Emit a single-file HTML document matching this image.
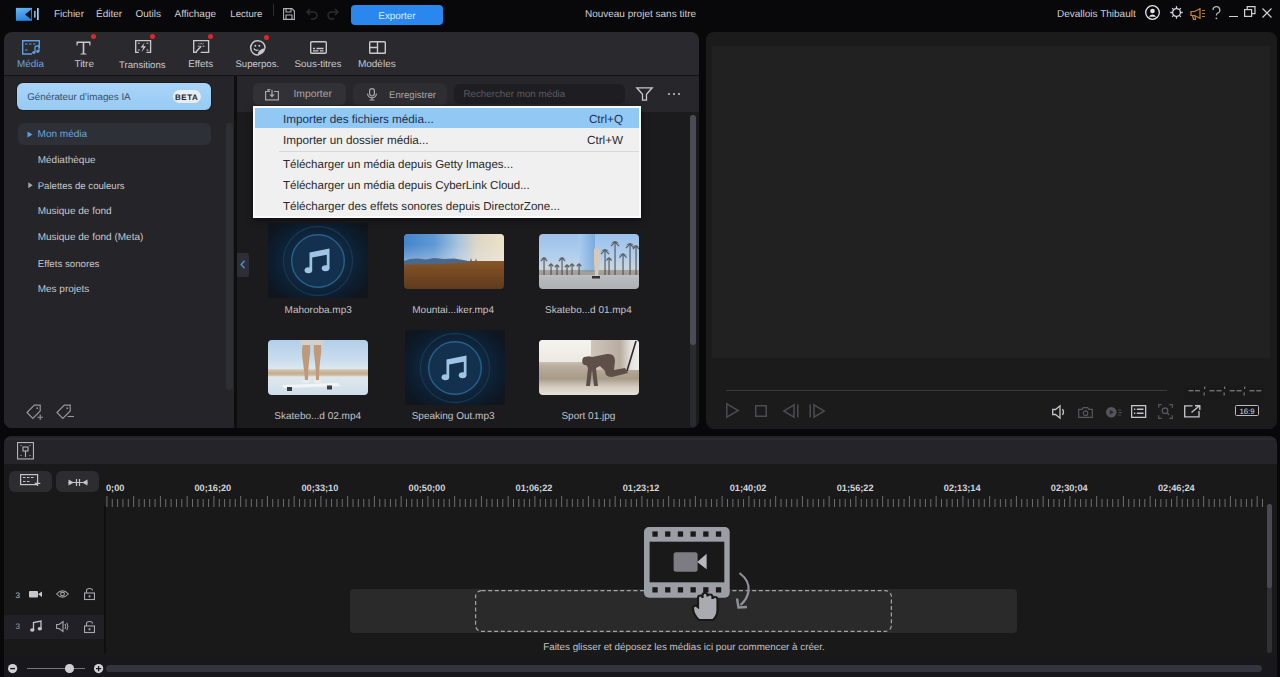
<!DOCTYPE html>
<html><head><meta charset="utf-8">
<style>
*{margin:0;padding:0;box-sizing:border-box}
html,body{text-rendering:geometricPrecision;width:1280px;height:677px;overflow:hidden;background:#08080a;font-family:"Liberation Sans",sans-serif;color:#c8c8cc;position:relative}
.a{position:absolute}
.t{position:absolute;white-space:nowrap;line-height:1}
svg{position:absolute;overflow:visible}
</style></head><body>
<svg style="left:0px;top:0px;" width="45" height="26" viewBox="0 0 45 26"><defs><linearGradient id="lg" x1="0" y1="0" x2="0.3" y2="1"><stop offset="0" stop-color="#66b8f6"/><stop offset="1" stop-color="#2c84de"/></linearGradient></defs><rect x="15.9" y="7.9" width="16.1" height="12.9" fill="url(#lg)"/><path d="M25 14.4 L31.2 9.6 V19.2 Z" fill="#08101c"/><rect x="34.1" y="10.9" width="1.5" height="6.8" fill="#8ccaf6"/><rect x="37" y="8" width="1.7" height="12" fill="#98d2fa"/></svg>
<div class="t" style="left:54px;top:10.04px;font-size:10px;color:#cfcfd2;">Fichier</div>
<div class="t" style="left:96px;top:10.04px;font-size:10px;color:#cfcfd2;">Éditer</div>
<div class="t" style="left:135.5px;top:10.04px;font-size:10px;color:#cfcfd2;">Outils</div>
<div class="t" style="left:174.5px;top:10.04px;font-size:10px;color:#cfcfd2;">Affichage</div>
<div class="t" style="left:230.3px;top:10.37px;font-size:9.6px;color:#cfcfd2;">Lecture</div>
<div class="a" style="left:273px;top:4px;width:1px;height:12px;background:#2e2e32;"></div>
<svg style="left:283px;top:8px;" width="12" height="12" viewBox="0 0 12 12"><g fill="none" stroke="#b0b0b4" stroke-width="1.1"><path d="M0.6 0.6H9L11.4 3V11.4H0.6Z"/><path d="M3 0.6V4H8V0.6"/><path d="M3 11.4V7H9V11.4"/></g></svg>
<svg style="left:306px;top:8px;" width="12" height="11" viewBox="0 0 12 11"><g fill="none" stroke="#2e2e32" stroke-width="1.4"><path d="M4 1L1 4L4 7"/><path d="M1 4H7.5A3.5 3.5 0 0 1 7.5 11H5"/></g></svg>
<svg style="left:327px;top:8px;" width="12" height="11" viewBox="0 0 12 11"><g fill="none" stroke="#2e2e32" stroke-width="1.4"><path d="M8 1L11 4L8 7"/><path d="M11 4H4.5A3.5 3.5 0 0 0 4.5 11H7"/></g></svg>
<div class="a" style="left:351px;top:5px;width:92px;height:20px;background:#2a87ee;border-radius:4px;"></div>
<div class="t" style="left:197px;width:400px;text-align:center;top:11.62px;font-size:9.9px;color:#dcefff;">Exporter</div>
<div class="t" style="left:440.5px;width:400px;text-align:center;top:10.04px;font-size:10px;color:#cfcfd2;">Nouveau projet sans titre</div>
<div class="t" style="left:1057px;top:10.04px;font-size:10px;color:#cfcfd2;">Devallois Thibault</div>
<svg style="left:1145px;top:5px;" width="15" height="15" viewBox="0 0 15 15"><circle cx="7.5" cy="7.5" r="6.8" fill="none" stroke="#e4e4e8" stroke-width="1.3"/><circle cx="7.5" cy="6" r="2.3" fill="#e4e4e8"/><path d="M3.8 11.8 Q7.5 7.2 11.2 11.8 Z" fill="#e4e4e8"/></svg>
<svg style="left:1170px;top:6px;" width="13" height="13" viewBox="0 0 13 13"><g fill="none" stroke="#d8d8dc" stroke-width="1.3"><circle cx="6.5" cy="6.5" r="3.9"/><path d="M6.5 0.3v2.2M6.5 10.5v2.2M0.3 6.5h2.2M10.5 6.5h2.2M2.1 2.1l1.5 1.5M9.4 9.4l1.5 1.5M2.1 10.9l1.5-1.5M9.4 3.6l1.5-1.5"/></g></svg>
<svg style="left:1190px;top:8px;" width="16" height="13" viewBox="0 0 16 13"><g fill="none" stroke="#c4843e" stroke-width="1.2"><path d="M1 3.5H4.5L10 0.8V10.2L4.5 7.5H1Z"/><path d="M2.5 7.5L3.5 11.5H5.5L5 7.5"/></g><g stroke="#c4843e" stroke-width="0.9"><path d="M12 2.5h3M12 5.5h3M12 8.5h3"/></g></svg>
<svg style="left:1212px;top:6px;" width="9" height="14" viewBox="0 0 9 14"><g fill="none" stroke="#b4b4b8" stroke-width="1.3"><path d="M1 4A3.4 3.4 0 1 1 5.5 7.2C4.6 7.7 4.4 8.3 4.4 9.5"/></g><circle cx="4.4" cy="12.3" r="0.9" fill="#b4b4b8"/></svg>
<div class="a" style="left:1229px;top:16px;width:9px;height:1.3px;background:#cfcfd2;"></div>
<svg style="left:1244px;top:6px;" width="12" height="11" viewBox="0 0 12 11"><g fill="none" stroke="#cfcfd2" stroke-width="1.2"><rect x="0.6" y="3.6" width="7" height="6.8"/><path d="M3.2 3.6V0.6H11V7.6H7.6"/></g></svg>
<svg style="left:1262px;top:8px;" width="10" height="10" viewBox="0 0 10 10"><g fill="none" stroke="#cfcfd2" stroke-width="1.2"><path d="M0.5 0.5L9.5 9.5M9.5 0.5L0.5 9.5"/></g></svg>
<div class="a" style="left:4px;top:32px;width:695px;height:396px;background:#2a2a2e;border-radius:8px;overflow:hidden">
<div class="a" style="left:0px;top:42.5px;width:695px;height:1.8px;background:#131315;"></div>
<div class="a" style="left:0px;top:44px;width:230px;height:352px;background:#252429;"></div>
<div class="a" style="left:230px;top:44px;width:3px;height:352px;background:#0e0e10;"></div>
<div class="a" style="left:233px;top:44px;width:462px;height:36px;background:#27272b;"></div>
<div class="a" style="left:233px;top:80px;width:462px;height:316px;background:#1b1a1c;"></div>
</div>
<svg style="left:22px;top:40px;" width="18" height="15" viewBox="0 0 18 15"><g fill="none" stroke="#5e9fe0" stroke-width="1.4"><path d="M10 14H0.7V0.7H17.3V8"/></g><g stroke="#5e9fe0" stroke-width="1.2"><path d="M3 4h2.5M7 4h2.5M11 4h2.5M3 10h2.5"/></g><path d="M13 6.5V12.2" stroke="#5e9fe0" stroke-width="1.3"/><path d="M13 6.5L17 5.5V11" stroke="#5e9fe0" stroke-width="1.3" fill="none"/><circle cx="11.8" cy="12.5" r="1.6" fill="#5e9fe0"/><circle cx="15.8" cy="11.3" r="1.6" fill="#5e9fe0"/></svg>
<div class="t" style="left:-169.5px;width:400px;text-align:center;top:60.42px;font-size:9.9px;color:#6aa6e0;">Média</div>
<svg style="left:76px;top:41px;" width="15" height="14" viewBox="0 0 15 14"><g fill="#c9c9cd"><path d="M0.5 0.5H14.5V4.5H13.5L13 2H8.3V12.3L10.5 12.8V13.5H4.5V12.8L6.7 12.3V2H2L1.5 4.5H0.5Z"/></g></svg>
<div class="a" style="left:90.7px;top:34.1px;width:5px;height:5px;background:#e0262e;border-radius:50%;"></div>
<div class="t" style="left:-115.8px;width:400px;text-align:center;top:60.42px;font-size:9.9px;color:#c9c9cd;">Titre</div>
<svg style="left:134.6px;top:40.4px;" width="16.3" height="13.1" viewBox="0 0 17 13.7"><g fill="none" stroke="#c9c9cd" stroke-width="1.4"><path d="M4 13H0.7V0.7H16.3V13H12"/></g><g stroke="#c9c9cd" stroke-width="1.1"><path d="M3 3.5h2M12 3.5h2M3 10.5h2M12 10.5h2"/></g><path d="M10 2.5L5.8 7.8H8.6L6.8 12.8L11.5 6.5H8.6Z" fill="#c9c9cd"/></svg>
<div class="a" style="left:149.6px;top:34.2px;width:5px;height:5px;background:#e0262e;border-radius:50%;"></div>
<div class="t" style="left:-57.69999999999999px;width:400px;text-align:center;top:60.57px;font-size:9.6px;color:#c9c9cd;">Transitions</div>
<svg style="left:192.7px;top:40.4px;" width="16.3" height="13.1" viewBox="0 0 17 13.7"><g fill="none" stroke="#c9c9cd" stroke-width="1.4"><path d="M4 13H0.7V0.7H16.3V13H8"/></g><g stroke="#c9c9cd" stroke-width="1"><path d="M6 3.5l1 1M8.5 3l0 1.5M11 3.5l-1 1M5 6.5h2M10 6.5h2"/></g><path d="M8.5 6.5L3 12.5" stroke="#c9c9cd" stroke-width="1.5"/></svg>
<div class="a" style="left:208px;top:34.1px;width:5px;height:5px;background:#e0262e;border-radius:50%;"></div>
<div class="t" style="left:0.6999999999999886px;width:400px;text-align:center;top:60.40px;font-size:9.8px;color:#c9c9cd;">Effets</div>
<svg style="left:250px;top:39.5px;" width="16" height="15.5" viewBox="0 0 16 15.5"><g fill="none" stroke="#c9c9cd" stroke-width="1.5"><path d="M15 8.5A7.2 7.2 0 1 0 8.5 15"/></g><path d="M15.3 8 Q15 13.5 8 15.4 Q7.5 12 9.5 10.5 Q11.5 8.5 15.3 8Z" fill="#c9c9cd"/><circle cx="5.3" cy="5.8" r="1" fill="#c9c9cd"/><circle cx="9.3" cy="5.8" r="1" fill="#c9c9cd"/><path d="M3.8 8.6Q5.5 11 8.5 10" stroke="#c9c9cd" stroke-width="1.2" fill="none"/></svg>
<div class="a" style="left:264.2px;top:34.8px;width:5px;height:5px;background:#e0262e;border-radius:50%;"></div>
<div class="t" style="left:57.30000000000001px;width:400px;text-align:center;top:60.37px;font-size:9.6px;color:#c9c9cd;">Superpos.</div>
<svg style="left:309.5px;top:40.5px;" width="17" height="13" viewBox="0 0 17 13"><g fill="none" stroke="#c9c9cd" stroke-width="1.4"><rect x="0.7" y="0.7" width="15.6" height="11.6" rx="1"/></g><g stroke="#c9c9cd" stroke-width="1.3"><path d="M3 7.5h2M6.5 7.5h7M3 9.8h5.5M10 9.8h3.5"/></g></svg>
<div class="t" style="left:118px;width:400px;text-align:center;top:60.20px;font-size:9.8px;color:#c9c9cd;">Sous-titres</div>
<svg style="left:368.5px;top:40.5px;" width="17" height="13" viewBox="0 0 17 13"><g fill="none" stroke="#c9c9cd" stroke-width="1.4"><rect x="0.7" y="0.7" width="15.6" height="11.6" rx="0.8"/><path d="M8.5 0.7V12.3M0.7 6.5H8.5"/></g></svg>
<div class="t" style="left:176.8px;width:400px;text-align:center;top:60.03px;font-size:10px;color:#c9c9cd;">Modèles</div>
<div class="a" style="left:17px;top:83px;width:194px;height:26.5px;border-radius:6px;background:linear-gradient(#a9d4f8,#98caf3);box-shadow:0 0 0 1px rgba(0,0,0,0.25)"></div>
<div class="t" style="left:27.2px;top:93.20px;font-size:9.8px;color:#34506c;">Générateur d’images IA</div>
<div class="a" style="left:172.5px;top:89.5px;width:28.5px;height:13px;background:#e9edf0;border-radius:7px;"></div>
<div class="t" style="left:-13.300000000000011px;width:400px;text-align:center;top:93.93px;font-size:8px;color:#1e2226;font-weight:bold;letter-spacing:0.6px;">BETA</div>
<div class="a" style="left:18px;top:122.5px;width:193px;height:22px;background:#2e3038;border-radius:6px;"></div>
<svg style="left:26.5px;top:130.5px;" width="6" height="7" viewBox="0 0 6 7"><path d="M0.5 0.5L5.5 3.5L0.5 6.5Z" fill="#5e9fe0"/></svg>
<div class="t" style="left:37.6px;top:129.63px;font-size:10px;color:#6aa6dd;">Mon média</div>
<div class="t" style="left:37.7px;top:155.84px;font-size:10px;color:#c8c8cc;">Médiathèque</div>
<svg style="left:27.5px;top:182px;" width="5" height="6.5" viewBox="0 0 5 6.5"><path d="M0.3 0.3L4.7 3.25L0.3 6.2Z" fill="#a8a8ac"/></svg>
<div class="t" style="left:37.7px;top:182.07px;font-size:9.6px;color:#c8c8cc;">Palettes de couleurs</div>
<div class="t" style="left:37.7px;top:207.44px;font-size:10px;color:#c8c8cc;">Musique de fond</div>
<div class="t" style="left:37.7px;top:233.34px;font-size:10px;color:#c8c8cc;">Musique de fond (Meta)</div>
<div class="t" style="left:37.7px;top:259.79px;font-size:9.7px;color:#c8c8cc;">Effets sonores</div>
<div class="t" style="left:37.7px;top:285.44px;font-size:10px;color:#c8c8cc;">Mes projets</div>
<div class="a" style="left:225.5px;top:123px;width:7px;height:267px;background:#2e2e35;border-radius:3.5px;"></div>
<svg style="left:25.5px;top:403.5px;" width="17" height="17" viewBox="0 0 17 17"><g fill="none" stroke="#96969a" stroke-width="1.2"><path d="M1 8.5L8.3 1.2H14.2V7L6.8 14.5Z"/></g><circle cx="11.2" cy="4.2" r="0.9" fill="#96969a"/><path d="M14.2 10.5v5.5M11.5 13.2h5.5" stroke="#96969a" stroke-width="1.1"/></svg>
<svg style="left:55.5px;top:403.5px;" width="19" height="17" viewBox="0 0 19 17"><g fill="none" stroke="#96969a" stroke-width="1.2"><path d="M1 8.5L8.3 1.2H14.2V7L6.8 14.5Z"/></g><circle cx="11.2" cy="4.2" r="0.9" fill="#96969a"/><path d="M11.5 12.5h6.5" stroke="#96969a" stroke-width="1.1"/></svg>
<div class="a" style="left:253px;top:83px;width:93px;height:22px;background:#323236;border-radius:6px;"></div>
<svg style="left:264.5px;top:89px;" width="14" height="11.5" viewBox="0 0 14 11.5"><g fill="none" stroke="#a8a8ac" stroke-width="1.2"><path d="M5 2.5H0.6V10.9H13.4V2.5H9"/><path d="M3 2.5V0.6H5.5"/></g><path d="M7 1V7.5" stroke="#a8a8ac" stroke-width="1.3"/><path d="M4.3 5.5L7 8.5L9.7 5.5Z" fill="#a8a8ac"/></svg>
<div class="t" style="left:293.5px;top:90.28px;font-size:10.3px;color:#a6a6aa;">Importer</div>
<div class="a" style="left:353px;top:83px;width:93.5px;height:22px;background:#2e2e32;border-radius:6px;"></div>
<svg style="left:366.5px;top:88px;" width="10" height="12.5" viewBox="0 0 10 12.5"><g fill="none" stroke="#a8a8ac" stroke-width="1.2"><rect x="2.6" y="0.6" width="4.8" height="7.4" rx="2.4"/><path d="M0.6 5.5A4.4 4.4 0 0 0 9.4 5.5M5 10V12M2.5 12H7.5"/></g></svg>
<div class="t" style="left:389.1px;top:90.87px;font-size:9.6px;color:#a6a6aa;">Enregistrer</div>
<div class="a" style="left:454px;top:83.5px;width:171px;height:20.5px;background:#1e1e22;border-radius:6px;"></div>
<div class="t" style="left:463.4px;top:90.40px;font-size:9.8px;color:#5a5a60;">Rechercher mon média</div>
<svg style="left:635.5px;top:87px;" width="17" height="14" viewBox="0 0 17 14"><path d="M0.8 0.8H16.2L10.5 7.3V13.2H6.5V7.3Z" fill="none" stroke="#c8c8cc" stroke-width="1.3"/></svg>
<div class="a" style="left:668px;top:93px;width:2.4px;height:2.4px;background:#c8c8cc;border-radius:50%;"></div>
<div class="a" style="left:673px;top:93px;width:2.4px;height:2.4px;background:#c8c8cc;border-radius:50%;"></div>
<div class="a" style="left:678px;top:93px;width:2.4px;height:2.4px;background:#c8c8cc;border-radius:50%;"></div>
<div class="a" style="left:689.5px;top:115px;width:6.5px;height:312px;background:#2a2a31;border-radius:3px;"></div>
<div class="a" style="left:689.5px;top:115px;width:6.5px;height:230px;background:#4a4c55;border-radius:3px;"></div>
<div class="a" style="left:268px;top:223px;width:100px;height:75px;background:radial-gradient(ellipse 64% 70% at 50% 50%,#13304c 0%,#102a43 40%,#0d1e30 68%,#0d1722 88%,#121519 100%)"></div>
<svg style="left:268px;top:223px;" width="100" height="75" viewBox="0 0 100 75"><circle cx="50.0" cy="38.0" r="34.5" fill="none" stroke="#173852" stroke-width="1.3"/><circle cx="50.0" cy="38.0" r="26.3" fill="#13314e" stroke="#27618a" stroke-width="1.4"/><g fill="#a0c4e4"><path d="M41.5 29.5 L61.5 25.5 V45.0 H58.8 V31.7 L44.2 34.5 V47.0 H41.5 Z"/><ellipse cx="40.4" cy="47.3" rx="3.8" ry="3"/><ellipse cx="57.6" cy="45.3" rx="3.8" ry="3"/></g></svg>
<div class="a" style="left:404.5px;top:329.5px;width:100px;height:75px;background:radial-gradient(ellipse 64% 70% at 50% 50%,#13304c 0%,#102a43 40%,#0d1e30 68%,#0d1722 88%,#121519 100%)"></div>
<svg style="left:404.5px;top:329.5px;" width="100" height="75" viewBox="0 0 100 75"><circle cx="50.0" cy="38.0" r="34.5" fill="none" stroke="#173852" stroke-width="1.3"/><circle cx="50.0" cy="38.0" r="26.3" fill="#13314e" stroke="#27618a" stroke-width="1.4"/><g fill="#a0c4e4"><path d="M41.5 29.5 L61.5 25.5 V45.0 H58.8 V31.7 L44.2 34.5 V47.0 H41.5 Z"/><ellipse cx="40.4" cy="47.3" rx="3.8" ry="3"/><ellipse cx="57.6" cy="45.3" rx="3.8" ry="3"/></g></svg>
<div class="a" style="left:403.5px;top:233.5px;width:100.5px;height:55px;border-radius:4px;overflow:hidden;background:linear-gradient(180deg,#a77a48 0%,#93602e 35%,#7a4c24 65%,#5e3a1e 100%)"><div class="a" style="left:0;top:0;width:100.5px;height:27.5px;background:linear-gradient(90deg,#4585cc 0%,#5f98d4 30%,#a9c5de 55%,#dcd6c6 72%,#eee2c8 100%)"></div><div class="a" style="left:0;top:0;width:100.5px;height:27.5px;background:linear-gradient(180deg,rgba(255,255,255,0) 40%,rgba(230,235,240,0.35) 100%)"></div><svg style="left:0;top:0" width="101" height="55"><path d="M0 27 L6 25 L14 24.5 L22 25.5 L30 24 L40 25 L50 24.5 L62 26.5 L68 28 L40 30 L0 30.5Z" fill="#4e6786"/><path d="M66 27.5 L67 24 L68 27.5Z M71 27.5 L72 24.5 L73 27.5Z" fill="#6a5a4a"/></svg></div>
<div class="a" style="left:538.5px;top:233.5px;width:100.5px;height:55px;border-radius:4px;overflow:hidden;background:linear-gradient(180deg,#9cc1ea 0%,#b2cfee 40%,#c9d6e2 62%,#c4c8cc 70%,#b9bcbf 78%,#aeb1b4 100%)"><div class="a" style="left:40px;top:0;width:16px;height:38px;background:linear-gradient(90deg,#a9cdef,#6ea3d8);opacity:0.75"></div><svg style="left:0;top:0" width="101" height="55"><rect x="0" y="36" width="101" height="5" fill="#8a7e72" opacity="0.55"/><g fill="#4a443c" opacity="0.75"><rect x="4.4" y="24" width="1.3" height="17"/><path d="M1.5 25.75 Q5 20.85 8.5 25.75 Q6.05 23.8 5 25.5 Q3.95 23.8 1.5 25.75Z"/><path d="M1.85 27.15 L5 24 L8.15 27.15" fill="none" stroke="#3e3a36" stroke-width="1.2"/><rect x="11.4" y="30" width="1.3" height="11"/><path d="M9.5 31.25 Q12 27.75 14.5 31.25 Q12.75 29.8 12 31.5 Q11.25 29.8 9.5 31.25Z"/><path d="M9.75 32.25 L12 30 L14.25 32.25" fill="none" stroke="#3e3a36" stroke-width="1.2"/><rect x="17.4" y="31" width="1.3" height="10"/><path d="M15.5 32.25 Q18 28.75 20.5 32.25 Q18.75 30.8 18 32.5 Q17.25 30.8 15.5 32.25Z"/><path d="M15.75 33.25 L18 31 L20.25 33.25" fill="none" stroke="#3e3a36" stroke-width="1.2"/><rect x="22.4" y="24" width="1.3" height="17"/><path d="M19.5 25.75 Q23 20.85 26.5 25.75 Q24.05 23.8 23 25.5 Q21.95 23.8 19.5 25.75Z"/><path d="M19.85 27.15 L23 24 L26.15 27.15" fill="none" stroke="#3e3a36" stroke-width="1.2"/><rect x="27.4" y="31" width="1.3" height="10"/><path d="M25.5 32.25 Q28 28.75 30.5 32.25 Q28.75 30.8 28 32.5 Q27.25 30.8 25.5 32.25Z"/><path d="M25.75 33.25 L28 31 L30.25 33.25" fill="none" stroke="#3e3a36" stroke-width="1.2"/><rect x="32.4" y="30" width="1.3" height="11"/><path d="M30.5 31.25 Q33 27.75 35.5 31.25 Q33.75 29.8 33 31.5 Q32.25 29.8 30.5 31.25Z"/><path d="M30.75 32.25 L33 30 L35.25 32.25" fill="none" stroke="#3e3a36" stroke-width="1.2"/><rect x="39.4" y="30" width="1.3" height="11"/><path d="M37.5 31.25 Q40 27.75 42.5 31.25 Q40.75 29.8 40 31.5 Q39.25 29.8 37.5 31.25Z"/><path d="M37.75 32.25 L40 30 L42.25 32.25" fill="none" stroke="#3e3a36" stroke-width="1.2"/><rect x="65.4" y="16" width="1.3" height="25"/><path d="M61.5 18.25 Q66 11.95 70.5 18.25 Q67.35 15.8 66 17.5 Q64.65 15.8 61.5 18.25Z"/><path d="M61.95 20.05 L66 16 L70.05 20.05" fill="none" stroke="#3e3a36" stroke-width="1.2"/><rect x="75.4" y="8" width="1.3" height="33"/><path d="M71.5 10.25 Q76 3.95 80.5 10.25 Q77.35 7.8 76 9.5 Q74.65 7.8 71.5 10.25Z"/><path d="M71.95 12.05 L76 8 L80.05 12.05" fill="none" stroke="#3e3a36" stroke-width="1.2"/><rect x="83.4" y="20" width="1.3" height="21"/><path d="M80 22.0 Q84 16.4 88 22.0 Q85.2 19.8 84 21.5 Q82.8 19.8 80 22.0Z"/><path d="M80.4 23.6 L84 20 L87.6 23.6" fill="none" stroke="#3e3a36" stroke-width="1.2"/><rect x="90.4" y="10" width="1.3" height="31"/><path d="M86.5 12.25 Q91 5.95 95.5 12.25 Q92.35 9.8 91 11.5 Q89.65 9.8 86.5 12.25Z"/><path d="M86.95 14.05 L91 10 L95.05 14.05" fill="none" stroke="#3e3a36" stroke-width="1.2"/><rect x="96.4" y="12" width="1.3" height="29"/><path d="M93.5 13.75 Q97 8.85 100.5 13.75 Q98.05 11.8 97 13.5 Q95.95 11.8 93.5 13.75Z"/><path d="M93.85 15.15 L97 12 L100.15 15.15" fill="none" stroke="#3e3a36" stroke-width="1.2"/><rect x="69.4" y="24" width="1.3" height="17"/><path d="M67 25.5 Q70 21.3 73 25.5 Q70.9 23.8 70 25.5 Q69.1 23.8 67 25.5Z"/><path d="M67.3 26.7 L70 24 L72.7 26.7" fill="none" stroke="#3e3a36" stroke-width="1.2"/></g><path d="M55 15 Q59 12 61 17 L61 28 L59 42 L56 42 L55 28 Z" fill="#d8c8b8"/><rect x="53" y="42" width="8" height="2.5" fill="#333"/></svg></div>
<div class="a" style="left:267.5px;top:339.5px;width:100.5px;height:55.5px;border-radius:4px;overflow:hidden;background:linear-gradient(180deg,#b2cfea 0%,#c8dcee 35%,#dce8f0 52%,#d4c8b4 54%,#c4ad90 60%,#cdbba2 64%,#dfe7ec 67%,#d7e3eb 85%,#cfdde8 100%)"><svg style="left:0;top:0" width="101" height="56"><g fill="#c09a78"><path d="M35 3 Q33 12 35 22 Q36 30 37 40 L40 40 Q40 30 41 22 Q43 12 42 3Z"/><path d="M46 3 Q45 12 47 22 Q48 30 48 40 L51 40 Q51 30 52 22 Q54 12 53 3Z"/></g><path d="M32 0 H56 L55 5 H33Z" fill="#d4d0cc"/><path d="M34 40 H41 V43 H34Z M46 40 H53 V43 H46Z" fill="#e8ecef"/><path d="M14 45 L70 43 L72 46 L16 48Z" fill="#f2f5f7"/><path d="M19 47 h5 v4 h-5Z M59 45.5 h5 v4 h-5Z" fill="#3c3c3e"/></svg></div>
<div class="a" style="left:539px;top:339.5px;width:100px;height:55.5px;border-radius:4px;overflow:hidden;background:linear-gradient(180deg,#e4e0da 0%,#dcd6ce 30%,#b8ad9f 48%,#a89a88 70%,#d6cec2 86%,#e6e0d6 100%)"><div class="a" style="left:0;top:0;width:52px;height:22px;background:linear-gradient(180deg,#f6f4f0,#ece8e2)"></div><div class="a" style="left:52px;top:0;width:48px;height:30px;background:linear-gradient(90deg,#cfc6ba,#b8ad9f 60%,#e8e6e2 85%,#f0eeea)"></div><svg style="left:0;top:0" width="100" height="56"><g fill="#5e5048"><path d="M44 19 Q48 15 53 17 L68 14 Q76 13 76 21 L75 30 L86 28 L89 33 L73 37 Q66 37 66 31 L61 26 L57 28 L59 46 L55 46 L53 30 L51 46 L47 46 L49 28 Z"/><ellipse cx="47" cy="21" rx="3.8" ry="4.3"/></g><path d="M88 31 L97 1" stroke="#2e2828" stroke-width="1.6"/></svg></div>
<div class="t" style="left:118.19999999999999px;width:400px;text-align:center;top:305.84px;font-size:10px;color:#c4c4c8;">Mahoroba.mp3</div>
<div class="t" style="left:253.10000000000002px;width:400px;text-align:center;top:305.84px;font-size:10px;color:#c4c4c8;">Mountai...iker.mp4</div>
<div class="t" style="left:388.4px;width:400px;text-align:center;top:305.84px;font-size:10px;color:#c4c4c8;">Skatebo...d 01.mp4</div>
<div class="t" style="left:117.69999999999999px;width:400px;text-align:center;top:411.84px;font-size:10px;color:#c4c4c8;">Skatebo...d 02.mp4</div>
<div class="t" style="left:253.10000000000002px;width:400px;text-align:center;top:411.84px;font-size:10px;color:#c4c4c8;">Speaking Out.mp3</div>
<div class="t" style="left:388.4px;width:400px;text-align:center;top:411.84px;font-size:10px;color:#c4c4c8;">Sport 01.jpg</div>
<div class="a" style="left:237px;top:253px;width:12px;height:24px;background:#2e2e36;border-radius:0 3px 3px 0;"></div>
<svg style="left:239.5px;top:260px;" width="6" height="9" viewBox="0 0 6 9"><path d="M4.5 0.8L1.2 4.5L4.5 8.2" fill="none" stroke="#4f8fd6" stroke-width="1.4"/></svg>
<div class="a" style="left:253px;top:106px;width:388px;height:112px;background:#f0f0f0;box-shadow:0 2px 6px rgba(0,0,0,0.5);border:2px solid #f9f9fa"></div>
<div class="a" style="left:255px;top:108px;width:384px;height:20px;background:#92c8f4;"></div>
<div class="a" style="left:279px;top:151px;width:360px;height:1px;background:#d8d8d8;"></div>
<div class="t" style="left:283px;top:114.00px;font-size:11.7px;color:#1a3350;">Importer des fichiers média...</div>
<div class="t" style="left:223px;width:400px;text-align:right;top:114.00px;font-size:11.7px;color:#1a3350;">Ctrl+Q</div>
<div class="t" style="left:283px;top:134.60px;font-size:11.7px;color:#2a2a2a;">Importer un dossier média...</div>
<div class="t" style="left:223px;width:400px;text-align:right;top:134.60px;font-size:11.7px;color:#2a2a2a;">Ctrl+W</div>
<div class="t" style="left:283px;top:159.97px;font-size:11.5px;color:#2a2a2a;">Télécharger un média depuis Getty Images...</div>
<div class="t" style="left:283px;top:180.77px;font-size:11.5px;color:#2a2a2a;">Télécharger un média depuis CyberLink Cloud...</div>
<div class="t" style="left:283px;top:200.98px;font-size:11.6px;color:#2a2a2a;">Télécharger des effets sonores depuis DirectorZone...</div>
<div class="a" style="left:706px;top:32px;width:571px;height:397px;background:#1b1b1c;border-radius:8px;"></div>
<div class="a" style="left:712px;top:46px;width:558px;height:312px;background:#212121;"></div>
<div class="a" style="left:725.5px;top:389.8px;width:441px;height:1.4px;background:#3a3a3c;"></div>
<div class="a" style="left:1184px;top:384.5px;width:80px;height:15px;background:#19191a;"></div>
<svg style="left:0px;top:0px;" width="1280" height="677" viewBox="0 0 1280 677"><g fill="#727276"><rect x="1188.5" y="390" width="5" height="1.4"/><rect x="1195" y="390" width="5" height="1.4"/><rect x="1209.5" y="390" width="5" height="1.4"/><rect x="1216.5" y="390" width="5" height="1.4"/><rect x="1229.7" y="390" width="5" height="1.4"/><rect x="1236.6" y="390" width="5" height="1.4"/><rect x="1249.5" y="390" width="5" height="1.4"/><rect x="1256.3" y="390" width="5" height="1.4"/><rect x="1204" y="386.5" width="1.3" height="2.5"/><rect x="1203.5" y="392.5" width="1.3" height="3"/><rect x="1224" y="386.5" width="1.3" height="2.5"/><rect x="1223.5" y="392.5" width="1.3" height="3"/><rect x="1244" y="386.5" width="1.3" height="2.5"/><rect x="1243.5" y="392.5" width="1.3" height="3"/></g></svg>
<svg style="left:726px;top:403px;" width="13" height="15" viewBox="0 0 13 15"><path d="M0.8 0.8L12.2 7.5L0.8 14.2Z" fill="none" stroke="#4c4c50" stroke-width="1.5"/></svg>
<svg style="left:754.5px;top:405px;" width="12" height="12" viewBox="0 0 12 12"><rect x="0.75" y="0.75" width="10.5" height="10.5" fill="none" stroke="#4c4c50" stroke-width="1.5"/></svg>
<svg style="left:782.5px;top:403.5px;" width="16" height="14" viewBox="0 0 16 14"><path d="M11 0.8L0.8 7L11 13.2Z" fill="none" stroke="#4c4c50" stroke-width="1.5"/><path d="M14.8 0.5V13.5" stroke="#4c4c50" stroke-width="1.5"/></svg>
<svg style="left:809px;top:403.5px;" width="16" height="14" viewBox="0 0 16 14"><path d="M5 0.8L15.2 7L5 13.2Z" fill="none" stroke="#4c4c50" stroke-width="1.5"/><path d="M1.2 0.5V13.5" stroke="#4c4c50" stroke-width="1.5"/></svg>
<svg style="left:1051.7px;top:405px;" width="14" height="14" viewBox="0 0 14 14"><path d="M0.7 4.5H3.5L8 0.8V13.2L3.5 9.5H0.7Z" fill="none" stroke="#c4c4c8" stroke-width="1.3"/><path d="M10.5 4Q12.5 7 10.5 10" fill="none" stroke="#c4c4c8" stroke-width="1.3"/></svg>
<svg style="left:1078px;top:407px;" width="15" height="11" viewBox="0 0 15 11"><path d="M0.7 2.3H4L5.3 0.7H9.7L11 2.3H14.3V10.3H0.7Z" fill="none" stroke="#58585c" stroke-width="1.2"/><circle cx="7.5" cy="6.2" r="2.3" fill="none" stroke="#58585c" stroke-width="1.2"/></svg>
<svg style="left:1106.4px;top:407.3px;" width="19" height="11" viewBox="0 0 19 11"><circle cx="5.3" cy="5.3" r="5.3" fill="#55555b"/><path d="M3.8 2.8L7.8 5.3L3.8 7.8Z" fill="#28282c"/><g stroke="#4a4a50" stroke-width="1"><path d="M12 3h3M12.5 5.5h3.5M12 8h3"/></g></svg>
<svg style="left:1131px;top:405px;" width="15.5" height="13" viewBox="0 0 15.5 13"><rect x="0.65" y="0.65" width="14" height="11.7" fill="none" stroke="#c4c4c8" stroke-width="1.3"/><g stroke="#c4c4c8" stroke-width="1.4"><path d="M3 4.3h1.3M5.8 4.3h6.7M3 8.3h1.3M5.8 8.3h6.7"/></g></svg>
<svg style="left:1158.2px;top:403.8px;" width="15" height="15" viewBox="0 0 15 15"><g fill="none" stroke="#55555a" stroke-width="1.3"><path d="M0.7 3.8V0.7H3.8M11.2 0.7H14.3V3.8M14.3 11.2V14.3H11.2M3.8 14.3H0.7V11.2"/><circle cx="7" cy="6.8" r="2.8"/><path d="M9.2 9L11.2 11"/></g></svg>
<svg style="left:1184px;top:405px;" width="16.5" height="12.5" viewBox="0 0 16.5 12.5"><g fill="none" stroke="#c4c4c8" stroke-width="1.35"><path d="M8.5 0.9H0.7V11.8H15V6"/><path d="M7.5 7.5L15.5 0.8M11 0.7H15.8V5"/></g></svg>
<div class="a" style="left:1235.3px;top:404.5px;width:23.5px;height:11px;border:1.3px solid #bcbcc0;border-radius:1.5px;background:#141416"></div>
<div class="t" style="left:1047px;width:400px;text-align:center;top:407.90px;font-size:7.8px;color:#d4d4d8;">16:9</div>
<div class="a" style="left:4px;top:436px;width:1273px;height:241px;background:#19191a;border-radius:8px 8px 0 0;overflow:hidden">
<div class="a" style="left:0px;top:0px;width:1273px;height:28px;background:#252429;"></div>
<div class="a" style="left:0px;top:2px;width:1273px;height:1.5px;background:#2b2a30;"></div>
</div>
<svg style="left:17px;top:442px;" width="17" height="17.5" viewBox="0 0 17 17.5"><g fill="none" stroke="#b4b4b8" stroke-width="1.1"><rect x="0.55" y="0.55" width="15.9" height="16.4"/></g><rect x="6" y="5" width="5" height="4" fill="none" stroke="#b4b4b8" stroke-width="1.1"/><path d="M8.5 9V15" stroke="#b4b4b8" stroke-width="1.1"/><g fill="#6a6a70"><rect x="3" y="3" width="2" height="1"/><rect x="12" y="3" width="2" height="1"/><rect x="3" y="13" width="2" height="1"/><rect x="12" y="13" width="2" height="1"/></g></svg>
<div class="a" style="left:8.5px;top:470.5px;width:43px;height:21.5px;background:#2c2c31;border-radius:6px;"></div>
<div class="a" style="left:55.5px;top:470.5px;width:43px;height:21.5px;background:#2c2c31;border-radius:6px;"></div>
<svg style="left:19.5px;top:474px;" width="21" height="12" viewBox="0 0 21 12"><rect x="0.6" y="0.6" width="17" height="10" fill="none" stroke="#c4c4c8" stroke-width="1.2"/><g stroke="#c4c4c8" stroke-width="1.2"><path d="M3 3.5h2.5M7 3.5h2.5M11 3.5h2.5M3 7.5h2.5M7 7.5h2.5"/><path d="M17.5 6.5V12M14.8 9.3H20.3" /></g></svg>
<svg style="left:67.5px;top:479px;" width="20" height="7" viewBox="0 0 20 7"><path d="M0.5 0.5L6 3.5L0.5 6.5Z" fill="#c4c4c8"/><path d="M19.5 0.5L14 3.5L19.5 6.5Z" fill="#c4c4c8"/><path d="M0.5 3.5H19.5" stroke="#c4c4c8" stroke-width="1"/><path d="M8.5 0V7M11.5 0V7" stroke="#c4c4c8" stroke-width="1.2"/></svg>
<div class="t" style="left:106px;top:483.71px;font-size:9.2px;color:#d2d6dc;font-weight:bold;">0;00</div>
<div class="t" style="left:12.849999999999994px;width:400px;text-align:center;top:483.71px;font-size:9.2px;color:#d2d6dc;font-weight:bold;">00;16;20</div>
<div class="t" style="left:119.89999999999998px;width:400px;text-align:center;top:483.71px;font-size:9.2px;color:#d2d6dc;font-weight:bold;">00;33;10</div>
<div class="t" style="left:226.95px;width:400px;text-align:center;top:483.71px;font-size:9.2px;color:#d2d6dc;font-weight:bold;">00;50;00</div>
<div class="t" style="left:334.0px;width:400px;text-align:center;top:483.71px;font-size:9.2px;color:#d2d6dc;font-weight:bold;">01;06;22</div>
<div class="t" style="left:441.04999999999995px;width:400px;text-align:center;top:483.71px;font-size:9.2px;color:#d2d6dc;font-weight:bold;">01;23;12</div>
<div class="t" style="left:548.0999999999999px;width:400px;text-align:center;top:483.71px;font-size:9.2px;color:#d2d6dc;font-weight:bold;">01;40;02</div>
<div class="t" style="left:655.15px;width:400px;text-align:center;top:483.71px;font-size:9.2px;color:#d2d6dc;font-weight:bold;">01;56;22</div>
<div class="t" style="left:762.1999999999999px;width:400px;text-align:center;top:483.71px;font-size:9.2px;color:#d2d6dc;font-weight:bold;">02;13;14</div>
<div class="t" style="left:869.25px;width:400px;text-align:center;top:483.71px;font-size:9.2px;color:#d2d6dc;font-weight:bold;">02;30;04</div>
<div class="t" style="left:976.3px;width:400px;text-align:center;top:483.71px;font-size:9.2px;color:#d2d6dc;font-weight:bold;">02;46;24</div>
<svg style="left:0px;top:0px;" width="1280" height="677" viewBox="0 0 1280 677"><g fill="#6e6e72"><rect x="106.40" y="496" width="1" height="11"/><rect x="111.75" y="499" width="1" height="8"/><rect x="117.10" y="499" width="1" height="8"/><rect x="122.45" y="499" width="1" height="8"/><rect x="127.80" y="499" width="1" height="8"/><rect x="133.15" y="496" width="1" height="11"/><rect x="138.50" y="499" width="1" height="8"/><rect x="143.85" y="499" width="1" height="8"/><rect x="149.20" y="499" width="1" height="8"/><rect x="154.55" y="499" width="1" height="8"/><rect x="159.90" y="496" width="1" height="11"/><rect x="165.25" y="499" width="1" height="8"/><rect x="170.60" y="499" width="1" height="8"/><rect x="175.95" y="499" width="1" height="8"/><rect x="181.30" y="499" width="1" height="8"/><rect x="186.65" y="496" width="1" height="11"/><rect x="192.00" y="499" width="1" height="8"/><rect x="197.35" y="499" width="1" height="8"/><rect x="202.70" y="499" width="1" height="8"/><rect x="208.05" y="499" width="1" height="8"/><rect x="213.40" y="496" width="1" height="11"/><rect x="218.75" y="499" width="1" height="8"/><rect x="224.10" y="499" width="1" height="8"/><rect x="229.45" y="499" width="1" height="8"/><rect x="234.80" y="499" width="1" height="8"/><rect x="240.15" y="496" width="1" height="11"/><rect x="245.50" y="499" width="1" height="8"/><rect x="250.85" y="499" width="1" height="8"/><rect x="256.20" y="499" width="1" height="8"/><rect x="261.55" y="499" width="1" height="8"/><rect x="266.90" y="496" width="1" height="11"/><rect x="272.25" y="499" width="1" height="8"/><rect x="277.60" y="499" width="1" height="8"/><rect x="282.95" y="499" width="1" height="8"/><rect x="288.30" y="499" width="1" height="8"/><rect x="293.65" y="496" width="1" height="11"/><rect x="299.00" y="499" width="1" height="8"/><rect x="304.35" y="499" width="1" height="8"/><rect x="309.70" y="499" width="1" height="8"/><rect x="315.05" y="499" width="1" height="8"/><rect x="320.40" y="496" width="1" height="11"/><rect x="325.75" y="499" width="1" height="8"/><rect x="331.10" y="499" width="1" height="8"/><rect x="336.45" y="499" width="1" height="8"/><rect x="341.80" y="499" width="1" height="8"/><rect x="347.15" y="496" width="1" height="11"/><rect x="352.50" y="499" width="1" height="8"/><rect x="357.85" y="499" width="1" height="8"/><rect x="363.20" y="499" width="1" height="8"/><rect x="368.55" y="499" width="1" height="8"/><rect x="373.90" y="496" width="1" height="11"/><rect x="379.25" y="499" width="1" height="8"/><rect x="384.60" y="499" width="1" height="8"/><rect x="389.95" y="499" width="1" height="8"/><rect x="395.30" y="499" width="1" height="8"/><rect x="400.65" y="496" width="1" height="11"/><rect x="406.00" y="499" width="1" height="8"/><rect x="411.35" y="499" width="1" height="8"/><rect x="416.70" y="499" width="1" height="8"/><rect x="422.05" y="499" width="1" height="8"/><rect x="427.40" y="496" width="1" height="11"/><rect x="432.75" y="499" width="1" height="8"/><rect x="438.10" y="499" width="1" height="8"/><rect x="443.45" y="499" width="1" height="8"/><rect x="448.80" y="499" width="1" height="8"/><rect x="454.15" y="496" width="1" height="11"/><rect x="459.50" y="499" width="1" height="8"/><rect x="464.85" y="499" width="1" height="8"/><rect x="470.20" y="499" width="1" height="8"/><rect x="475.55" y="499" width="1" height="8"/><rect x="480.90" y="496" width="1" height="11"/><rect x="486.25" y="499" width="1" height="8"/><rect x="491.60" y="499" width="1" height="8"/><rect x="496.95" y="499" width="1" height="8"/><rect x="502.30" y="499" width="1" height="8"/><rect x="507.65" y="496" width="1" height="11"/><rect x="513.00" y="499" width="1" height="8"/><rect x="518.35" y="499" width="1" height="8"/><rect x="523.70" y="499" width="1" height="8"/><rect x="529.05" y="499" width="1" height="8"/><rect x="534.40" y="496" width="1" height="11"/><rect x="539.75" y="499" width="1" height="8"/><rect x="545.10" y="499" width="1" height="8"/><rect x="550.45" y="499" width="1" height="8"/><rect x="555.80" y="499" width="1" height="8"/><rect x="561.15" y="496" width="1" height="11"/><rect x="566.50" y="499" width="1" height="8"/><rect x="571.85" y="499" width="1" height="8"/><rect x="577.20" y="499" width="1" height="8"/><rect x="582.55" y="499" width="1" height="8"/><rect x="587.90" y="496" width="1" height="11"/><rect x="593.25" y="499" width="1" height="8"/><rect x="598.60" y="499" width="1" height="8"/><rect x="603.95" y="499" width="1" height="8"/><rect x="609.30" y="499" width="1" height="8"/><rect x="614.65" y="496" width="1" height="11"/><rect x="620.00" y="499" width="1" height="8"/><rect x="625.35" y="499" width="1" height="8"/><rect x="630.70" y="499" width="1" height="8"/><rect x="636.05" y="499" width="1" height="8"/><rect x="641.40" y="496" width="1" height="11"/><rect x="646.75" y="499" width="1" height="8"/><rect x="652.10" y="499" width="1" height="8"/><rect x="657.45" y="499" width="1" height="8"/><rect x="662.80" y="499" width="1" height="8"/><rect x="668.15" y="496" width="1" height="11"/><rect x="673.50" y="499" width="1" height="8"/><rect x="678.85" y="499" width="1" height="8"/><rect x="684.20" y="499" width="1" height="8"/><rect x="689.55" y="499" width="1" height="8"/><rect x="694.90" y="496" width="1" height="11"/><rect x="700.25" y="499" width="1" height="8"/><rect x="705.60" y="499" width="1" height="8"/><rect x="710.95" y="499" width="1" height="8"/><rect x="716.30" y="499" width="1" height="8"/><rect x="721.65" y="496" width="1" height="11"/><rect x="727.00" y="499" width="1" height="8"/><rect x="732.35" y="499" width="1" height="8"/><rect x="737.70" y="499" width="1" height="8"/><rect x="743.05" y="499" width="1" height="8"/><rect x="748.40" y="496" width="1" height="11"/><rect x="753.75" y="499" width="1" height="8"/><rect x="759.10" y="499" width="1" height="8"/><rect x="764.45" y="499" width="1" height="8"/><rect x="769.80" y="499" width="1" height="8"/><rect x="775.15" y="496" width="1" height="11"/><rect x="780.50" y="499" width="1" height="8"/><rect x="785.85" y="499" width="1" height="8"/><rect x="791.20" y="499" width="1" height="8"/><rect x="796.55" y="499" width="1" height="8"/><rect x="801.90" y="496" width="1" height="11"/><rect x="807.25" y="499" width="1" height="8"/><rect x="812.60" y="499" width="1" height="8"/><rect x="817.95" y="499" width="1" height="8"/><rect x="823.30" y="499" width="1" height="8"/><rect x="828.65" y="496" width="1" height="11"/><rect x="834.00" y="499" width="1" height="8"/><rect x="839.35" y="499" width="1" height="8"/><rect x="844.70" y="499" width="1" height="8"/><rect x="850.05" y="499" width="1" height="8"/><rect x="855.40" y="496" width="1" height="11"/><rect x="860.75" y="499" width="1" height="8"/><rect x="866.10" y="499" width="1" height="8"/><rect x="871.45" y="499" width="1" height="8"/><rect x="876.80" y="499" width="1" height="8"/><rect x="882.15" y="496" width="1" height="11"/><rect x="887.50" y="499" width="1" height="8"/><rect x="892.85" y="499" width="1" height="8"/><rect x="898.20" y="499" width="1" height="8"/><rect x="903.55" y="499" width="1" height="8"/><rect x="908.90" y="496" width="1" height="11"/><rect x="914.25" y="499" width="1" height="8"/><rect x="919.60" y="499" width="1" height="8"/><rect x="924.95" y="499" width="1" height="8"/><rect x="930.30" y="499" width="1" height="8"/><rect x="935.65" y="496" width="1" height="11"/><rect x="941.00" y="499" width="1" height="8"/><rect x="946.35" y="499" width="1" height="8"/><rect x="951.70" y="499" width="1" height="8"/><rect x="957.05" y="499" width="1" height="8"/><rect x="962.40" y="496" width="1" height="11"/><rect x="967.75" y="499" width="1" height="8"/><rect x="973.10" y="499" width="1" height="8"/><rect x="978.45" y="499" width="1" height="8"/><rect x="983.80" y="499" width="1" height="8"/><rect x="989.15" y="496" width="1" height="11"/><rect x="994.50" y="499" width="1" height="8"/><rect x="999.85" y="499" width="1" height="8"/><rect x="1005.20" y="499" width="1" height="8"/><rect x="1010.55" y="499" width="1" height="8"/><rect x="1015.90" y="496" width="1" height="11"/><rect x="1021.25" y="499" width="1" height="8"/><rect x="1026.60" y="499" width="1" height="8"/><rect x="1031.95" y="499" width="1" height="8"/><rect x="1037.30" y="499" width="1" height="8"/><rect x="1042.65" y="496" width="1" height="11"/><rect x="1048.00" y="499" width="1" height="8"/><rect x="1053.35" y="499" width="1" height="8"/><rect x="1058.70" y="499" width="1" height="8"/><rect x="1064.05" y="499" width="1" height="8"/><rect x="1069.40" y="496" width="1" height="11"/><rect x="1074.75" y="499" width="1" height="8"/><rect x="1080.10" y="499" width="1" height="8"/><rect x="1085.45" y="499" width="1" height="8"/><rect x="1090.80" y="499" width="1" height="8"/><rect x="1096.15" y="496" width="1" height="11"/><rect x="1101.50" y="499" width="1" height="8"/><rect x="1106.85" y="499" width="1" height="8"/><rect x="1112.20" y="499" width="1" height="8"/><rect x="1117.55" y="499" width="1" height="8"/><rect x="1122.90" y="496" width="1" height="11"/><rect x="1128.25" y="499" width="1" height="8"/><rect x="1133.60" y="499" width="1" height="8"/><rect x="1138.95" y="499" width="1" height="8"/><rect x="1144.30" y="499" width="1" height="8"/><rect x="1149.65" y="496" width="1" height="11"/><rect x="1155.00" y="499" width="1" height="8"/><rect x="1160.35" y="499" width="1" height="8"/><rect x="1165.70" y="499" width="1" height="8"/><rect x="1171.05" y="499" width="1" height="8"/><rect x="1176.40" y="496" width="1" height="11"/><rect x="1181.75" y="499" width="1" height="8"/><rect x="1187.10" y="499" width="1" height="8"/><rect x="1192.45" y="499" width="1" height="8"/><rect x="1197.80" y="499" width="1" height="8"/><rect x="1203.15" y="496" width="1" height="11"/><rect x="1208.50" y="499" width="1" height="8"/><rect x="1213.85" y="499" width="1" height="8"/><rect x="1219.20" y="499" width="1" height="8"/><rect x="1224.55" y="499" width="1" height="8"/><rect x="1229.90" y="496" width="1" height="11"/><rect x="1235.25" y="499" width="1" height="8"/><rect x="1240.60" y="499" width="1" height="8"/><rect x="1245.95" y="499" width="1" height="8"/><rect x="1251.30" y="499" width="1" height="8"/><rect x="1256.65" y="496" width="1" height="11"/><rect x="1262.00" y="499" width="1" height="8"/></g></svg>
<div class="a" style="left:103.5px;top:506px;width:2.7px;height:148px;background:#0f0f10;"></div>
<div class="a" style="left:4px;top:615px;width:99.5px;height:24px;background:#202026;"></div>
<div class="t" style="left:15.5px;top:591.53px;font-size:8px;color:#c4c4c8;">3</div>
<div class="t" style="left:15.5px;top:622.53px;font-size:8px;color:#a4a4a8;">3</div>
<svg style="left:29px;top:591px;" width="13" height="6.5" viewBox="0 0 13 6.5"><rect x="0" y="0" width="9" height="6.5" rx="1" fill="#c8c8cc"/><path d="M9 3.25L13 0.5V6Z" fill="#c8c8cc"/></svg>
<svg style="left:55.5px;top:590px;" width="13" height="8" viewBox="0 0 13 8"><path d="M0.6 4Q6.5 -2.5 12.4 4Q6.5 10.5 0.6 4Z" fill="none" stroke="#a8a8ac" stroke-width="1.1"/><circle cx="6.5" cy="4" r="1.9" fill="none" stroke="#a8a8ac" stroke-width="1.1"/></svg>
<svg style="left:83.5px;top:587.5px;" width="11" height="12" viewBox="0 0 11 12"><path d="M2.5 5V2.5A3 2 0 0 1 8.5 2.5" fill="none" stroke="#a8a8ac" stroke-width="1.1"/><rect x="0.55" y="5" width="9.9" height="6.5" fill="none" stroke="#a8a8ac" stroke-width="1.1"/><rect x="4.6" y="7.3" width="1.8" height="2" fill="#a8a8ac"/></svg>
<svg style="left:30px;top:621px;" width="12" height="11" viewBox="0 0 12 11"><path d="M3.5 9V1.5L11 0V7.5" fill="none" stroke="#c4c4c8" stroke-width="1.3"/><ellipse cx="2.3" cy="9" rx="2.2" ry="1.8" fill="#c4c4c8"/><ellipse cx="9.8" cy="7.7" rx="2.2" ry="1.8" fill="#c4c4c8"/></svg>
<svg style="left:56px;top:620.5px;" width="12.5" height="11" viewBox="0 0 12.5 11"><path d="M0.6 3.5H3L7 0.6V10.4L3 7.5H0.6Z" fill="none" stroke="#a8a8ac" stroke-width="1.1"/><path d="M9 3Q10.5 5.5 9 8M10.8 1.8Q13 5.5 10.8 9.2" fill="none" stroke="#a8a8ac" stroke-width="1"/></svg>
<svg style="left:83.5px;top:620.5px;" width="11" height="12" viewBox="0 0 11 12"><path d="M2.5 5V2.5A3 2 0 0 1 8.5 2.5" fill="none" stroke="#a8a8ac" stroke-width="1.1"/><rect x="0.55" y="5" width="9.9" height="6.5" fill="none" stroke="#a8a8ac" stroke-width="1.1"/><rect x="4.6" y="7.3" width="1.8" height="2" fill="#a8a8ac"/></svg>
<div class="a" style="left:350px;top:589px;width:667px;height:43.5px;background:#2a2a2b;border-radius:4px;"></div>
<svg style="left:475px;top:589.5px;" width="417" height="42" viewBox="0 0 417 42"><rect x="0.6" y="0.6" width="415.8" height="40.8" rx="6" fill="none" stroke="#a4a4a8" stroke-width="1.2" stroke-dasharray="4 2.6"/></svg>
<svg style="left:644.4px;top:527.3px;" width="86" height="71" viewBox="0 0 86 71"><rect x="0" y="0" width="85.7" height="70.7" rx="5" fill="#9c9ea6"/><rect x="5.6" y="14.7" width="74.7" height="40.6" fill="#19191a"/><rect x="8.4" y="4.4" width="5.3" height="5.3" fill="#19191a"/><rect x="8.4" y="60.2" width="5.3" height="5.3" fill="#19191a"/><rect x="21.1" y="4.4" width="5.3" height="5.3" fill="#19191a"/><rect x="21.1" y="60.2" width="5.3" height="5.3" fill="#19191a"/><rect x="33.8" y="4.4" width="5.3" height="5.3" fill="#19191a"/><rect x="33.8" y="60.2" width="5.3" height="5.3" fill="#19191a"/><rect x="46.5" y="4.4" width="5.3" height="5.3" fill="#19191a"/><rect x="46.5" y="60.2" width="5.3" height="5.3" fill="#19191a"/><rect x="59.2" y="4.4" width="5.3" height="5.3" fill="#19191a"/><rect x="59.2" y="60.2" width="5.3" height="5.3" fill="#19191a"/><rect x="71.9" y="4.4" width="5.3" height="5.3" fill="#19191a"/><rect x="71.9" y="60.2" width="5.3" height="5.3" fill="#19191a"/><rect x="29.6" y="25.2" width="24" height="19.5" rx="2.5" fill="#7c7c82"/><path d="M53.2 35L62.6 26.7V42.3Z" fill="#b6b8be"/></svg>
<svg style="left:690px;top:590px;" width="32" height="32" viewBox="0 0 32 32"><path d="M9 30 Q3.5 25 3 19 Q2.8 15.5 6 15.5 L8 17 L8 8 Q8 5.5 10.5 5.5 Q12.5 5.5 12.5 8 L12.5 5.5 Q12.5 3 15 3 Q17.5 3 17.5 5.5 L17.5 6.5 Q17.5 4.5 20 4.5 Q22.5 4.5 22.5 7 L22.5 9 Q22.5 7 25 7 Q27.5 7 27.5 9.5 L27.5 20 Q27.5 26 23 30 Z" fill="#a9abb1" stroke="#19191a" stroke-width="2.2"/></svg>
<svg style="left:734px;top:571px;" width="18" height="40" viewBox="0 0 18 40"><path d="M5.5 2 Q16 10 14.5 20 Q13.5 28 6.5 34" fill="none" stroke="#8e9298" stroke-width="2.2"/><path d="M3 27.5 L4.5 36.5 L13 36" fill="none" stroke="#8e9298" stroke-width="2.4"/></svg>
<div class="t" style="left:484px;width:400px;text-align:center;top:642.70px;font-size:9.8px;color:#c4c4c8;">Faites glisser et déposez les médias ici pour commencer à créer.</div>
<div class="a" style="left:4px;top:656px;width:1273px;height:21px;background:#18181c;"></div>
<div class="a" style="left:106px;top:664.5px;width:1156px;height:7.5px;background:#34343f;border-radius:3.5px;"></div>
<svg style="left:8px;top:664px;" width="10" height="10" viewBox="0 0 10 10"><circle cx="4.6" cy="4.6" r="4.6" fill="#d2d2d6"/><path d="M2.2 4.6H7" stroke="#18181c" stroke-width="1.4"/></svg>
<div class="a" style="left:26.5px;top:668px;width:58.5px;height:1px;background:#77777b;"></div>
<div class="a" style="left:65.2px;top:664.3px;width:8.6px;height:8.6px;background:#cfcfd3;border-radius:50%;"></div>
<svg style="left:93.8px;top:664px;" width="10" height="10" viewBox="0 0 10 10"><circle cx="4.6" cy="4.6" r="4.6" fill="#d2d2d6"/><path d="M2 4.6H7.2M4.6 2V7.2" stroke="#18181c" stroke-width="1.3"/></svg>
<div class="a" style="left:1266.5px;top:504px;width:5.5px;height:149px;background:#303036;border-radius:2.5px;"></div>
<div class="a" style="left:1266.5px;top:504px;width:5.5px;height:84px;background:#4a4a54;border-radius:2.5px;"></div>
</body></html>
